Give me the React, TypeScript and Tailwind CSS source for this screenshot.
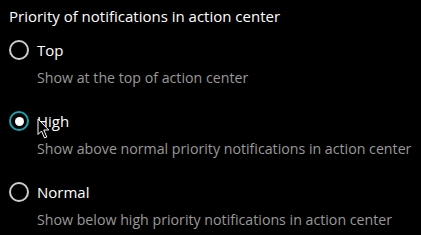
import React from "react";

const options = [
  { label: "Top", desc: "Show at the top of action center", checked: false },
  { label: "High", desc: "Show above normal priority notifications in action center", checked: true },
  { label: "Normal", desc: "Show below high priority notifications in action center", checked: false },
];

function Radio({ checked }: { checked: boolean }) {
  if (checked) {
    return (
      <span className="flex h-[20px] w-[20px] shrink-0 items-center justify-center rounded-full border-2 border-[#1ca0ae]">
        <span className="h-[9px] w-[9px] rounded-full bg-white" />
      </span>
    );
  }
  return <span className="h-[20px] w-[20px] shrink-0 rounded-full border-2 border-[#cccccc]" />;
}

function Cursor() {
  return (
    <svg className="absolute left-[37px] top-[118px]" width="14" height="22" viewBox="0 0 14 22">
      <path d="M1 1 L1 16.5 L4.5 13 L7.5 20 L9.8 19 L6.8 12 L11.8 12 Z" fill="#000" stroke="#fff" strokeWidth="1" strokeLinejoin="round" />
    </svg>
  );
}

export default function App() {
  return (
    <div
      className="relative h-[235px] w-[421px] overflow-hidden bg-black pl-[9px] pt-[6px]"
      style={{ fontFamily: '"Open Sans", "Noto Sans", sans-serif' }}
    >
      <div className="text-[15px] leading-[20px] text-white">Priority of notifications in action center</div>
      <div className="mt-[14px] flex flex-col gap-[23px]">
        {options.map((o) => (
          <div key={o.label} className="flex flex-col">
            <div className="flex items-center gap-[8px]">
              <Radio checked={o.checked} />
              <span className="text-[15px] leading-[20px] text-white">{o.label}</span>
            </div>
            <div className="mt-[8px] pl-[28px] text-[14.2px] leading-[20px] text-[#999999]">{o.desc}</div>
          </div>
        ))}
      </div>
      <Cursor />
    </div>
  );
}
